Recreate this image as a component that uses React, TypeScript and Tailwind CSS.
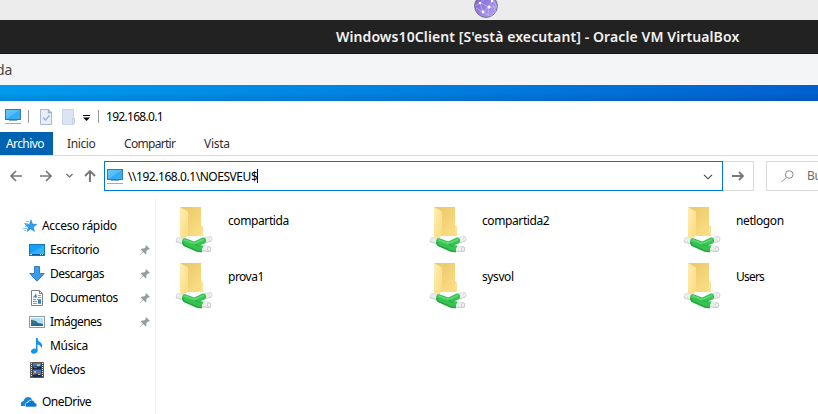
import React from "react";

const ui = "font-['Noto_Sans','Open_Sans',sans-serif] text-[12px] leading-[16px] whitespace-nowrap";

function Monitor({ className }: { className: string }) {
  return (
    <svg width="16" height="16" viewBox="0 0 16 16" className={`block shrink-0 ${className}`}>
      <defs>
        <linearGradient id="screen" x1="0" y1="0" x2="1" y2="1">
          <stop offset="0" stopColor="#6bcbfa" />
          <stop offset=".5" stopColor="#4fbbf8" />
          <stop offset=".52" stopColor="#34aaf5" />
          <stop offset="1" stopColor="#38b2fa" />
        </linearGradient>
      </defs>
      <rect x=".5" y=".5" width="15" height="10" fill="url(#screen)" stroke="#3978a0" />
      <path d="M4 11h8v1H4z" fill="#81aac5" />
      <path d="M0 14.5h16" stroke="#93b0c0" />
    </svg>
  );
}

function Globe() {
  return (
    <svg width="24" height="18" viewBox="0 0 24 18" className="block">
      <defs>
        <linearGradient id="globe" x1="0" y1="0" x2="1" y2="1">
          <stop offset=".2" stopColor="#8469d5" />
          <stop offset="1" stopColor="#b8a8f5" />
        </linearGradient>
      </defs>
      <circle cx="12" cy="6" r="11.4" fill="url(#globe)" stroke="#74708d" />
      <path d="M1 6 6 3l9 4-6 5-3-9 5-4m4 8 4-7 4 7-8 0-1 9m-5-4-7-4m7 4 7 4 6-4-3-7" fill="none" stroke="#c9bdf3" strokeWidth=".6" />
      <circle cx="6" cy="3" r="1.3" fill="#fff" />
      <circle cx="15" cy="7" r="1.5" fill="#fff" />
      <circle cx="9" cy="12" r="1.4" fill="#fff" />
      <circle cx="18" cy="1" r="1.2" fill="#fff" />
    </svg>
  );
}

function Folder() {
  return (
    <svg width="40" height="50" viewBox="0 0 40 50" className="block shrink-0">
      <defs>
        <linearGradient id="folderBack" x1="0" y1="0" x2="1" y2="1">
          <stop stopColor="#e8c667" />
          <stop offset="1" stopColor="#ffe087" />
        </linearGradient>
        <linearGradient id="folderFront" x1="0" y1="0" x2="1" y2="1">
          <stop stopColor="#ffeeb3" />
          <stop offset="1" stopColor="#fada80" />
        </linearGradient>
      </defs>
      <path d="M5 3h21v18l2 2v9H12z" fill="url(#folderBack)" />
      <path d="M5 3l8 4.5V30l-3 5-5-2z" fill="url(#folderFront)" />
      <path d="M26 21l2 2v9h-2z" fill="#fce394" />
      <g strokeLinecap="round" strokeLinejoin="round" fill="none">
        <path d="M3.8 36.2l6 1.7M28 37.2l6.3-2M27 44.3l6.3 1" stroke="#cdd1d2" strokeWidth="6" />
        <path d="M3.8 35.8l6 1.7M28 36.8l6.3-2M27 43.9l6.3 1" stroke="#eceeef" strokeWidth="4.4" />
      </g>
      <path
        d="M7.3 36Q8 33.8 10.4 34.3L19.3 37.4 27.6 33.6Q30 33 31 35.5 31.8 38 29.8 39.2L25.4 41.2 28.4 41.8Q26.6 44.5 27 47.9 25 48.6 21.5 47.8L9.2 42.2Q6.4 40.6 7.3 36z"
        fill="#37c252"
      />
      <path d="M8 38Q8 41 10 41.6L22 46.9l5 .8" stroke="#25a33f" strokeWidth="1.3" fill="none" />
      <path d="M9.2 35.9 19.3 39.6 29 35.3" stroke="#56d96e" strokeWidth="2" fill="none" strokeLinejoin="round" />
      <path d="M19.5 40.4l4.6 1.6" stroke="#2cb048" strokeWidth="1.2" />
      <ellipse cx="34" cy="45" rx="1.5" ry="2.2" fill="#f8f8f8" stroke="#c3c6c7" strokeWidth=".8" />
      <ellipse cx="3" cy="36" rx="1.2" ry="2" fill="#fafafa" stroke="#d6d8d9" strokeWidth=".7" />
      <ellipse cx="35.3" cy="34.9" rx="1.2" ry="2" fill="#fafafa" stroke="#d6d8d9" strokeWidth=".7" />
    </svg>
  );
}

function Pin() {
  return (
    <svg width="12" height="12" viewBox="0 0 12 12" className="block">
      <path d="M7 1l4 4-1.2.6-.8-.2-1.7 1.8.2 2.2-1.1.8-2.1-2.1L1 11.3l-.4-.4L3.7 7.4 1.8 5.5l1-1 2.2.1 1.8-1.7-.3-.9z" fill="#929da6" />
    </svg>
  );
}

type Kind = "star" | "desktop" | "download" | "document" | "picture" | "music" | "video" | "cloud";

function SideIcon({ kind }: { kind: Kind }) {
  return (
    <svg width="16" height="16" viewBox="0 0 16 16" className="block shrink-0">
      {kind === "star" && (
        <>
          <path d="M9 2l1.5 4.1 4.5.2-3.6 2.7 1.1 4.5L8.8 11 5 13.5l1.2-4.3L3 6.5h4.3z" fill="#2e9de7" stroke="#1684ce" strokeWidth=".5" />
          <path d="M4 3.5h3M2 5.5h4M3 8.5h3M1 10.5h4M2 12.5h2" stroke="#67b6e7" strokeWidth=".8" />
        </>
      )}
      {kind === "desktop" && (
        <>
          <rect x=".5" y="2.5" width="15" height="11" fill="#16a0f8" stroke="#1579b9" />
          <path d="M1 12L15 3v9z" fill="#34b0fc" />
          <path d="M1 12.5h14" stroke="#075b99" />
          <path d="M1 12.5h2m8 0h1m1 0h1" stroke="#b8e9ff" />
        </>
      )}
      {kind === "download" && <path d="M5.5.5h5v7h4.7L8 15.2.8 7.5h4.7z" fill="#3c9cea" stroke="#2c7fc8" />}
      {kind === "document" && (
        <>
          <path d="M2.5.5h8l3 3v12h-11z" fill="#fff" stroke="#7d8286" />
          <path d="M10.5.5v3h3" fill="none" stroke="#7d8286" />
          <path d="M9 5.5h3M9 7.5h3M4 9.5h3m1 0h4M4 11.5h4M4 13.5h4m1 0h3" stroke="#6f9fbe" />
          <path d="M4 7.5h4l-1-4zM9 10h3v3H9z" fill="#3583ba" />
        </>
      )}
      {kind === "picture" && (
        <>
          <rect x=".5" y="2.5" width="15" height="11" fill="#fff" stroke="#8f999f" />
          <path d="M2 4h12v8H2z" fill="#b4def5" />
          <path d="M2 6q5 0 7 3l5 1v2H2z" fill="#397478" />
          <path d="M2 10.5q6-1.5 12-.5v2H2z" fill="#2368a0" />
        </>
      )}
      {kind === "music" && (
        <>
          <path d="M7 0h1.5q.3 3 3 4.5 3 2.2.8 6-.2-3.2-3.8-4v6.7L7 14z" fill="#1393ed" />
          <ellipse cx="5.2" cy="13.1" rx="3.3" ry="2.5" fill="#1094f0" transform="rotate(-15 5.2 13.1)" />
        </>
      )}
      {kind === "video" && (
        <>
          <path d="M1.5.5h13v15h-13z" fill="#414346" stroke="#5c5d60" />
          <path d="M4 1h8v6H4zM4 8h8v7H4z" fill="#4078c4" />
          <path d="M4 5l3-1 2 1 3-1v3H4zM4 13l4-1 4 1v2H4z" fill="#182d4d" />
          <path d="M8 2h3v2H8zm-3 7h2v2H5zm4 3h2v1H9z" fill="#e0b449" />
          <path d="M5 5h3v1H5zm3 5h2v1H8z" fill="#b34e52" />
          <path d="M2.5 1v14M13.5 1v14" stroke="#eee" strokeDasharray="1 1" />
        </>
      )}
      {kind === "cloud" && (
        <>
          <path d="M0 12V9q.5-2 2.6-2Q3.8 3 7.2 3q3 0 4.2 2.5L7 7 4 12z" fill="#1684d4" />
          <path d="M5 13q-2-2 0-4 .8-.8 2-.6Q8 6 10.5 6q2.7 0 3.3 2.8 2.2.3 2.2 2.4 0 1.8-2 1.8z" fill="#0878d4" stroke="#fff" strokeWidth=".6" />
        </>
      )}
    </svg>
  );
}

const places: { name: string; kind: Kind; pin?: boolean; track: string }[] = [
  { name: "Escritorio", kind: "desktop", pin: true, track: "tracking-[-0.4px]" },
  { name: "Descargas", kind: "download", pin: true, track: "tracking-[-0.5px]" },
  { name: "Documentos", kind: "document", pin: true, track: "tracking-[-0.4px]" },
  { name: "Imágenes", kind: "picture", pin: true, track: "tracking-[-0.6px]" },
  { name: "Música", kind: "music", track: "tracking-[-0.3px]" },
  { name: "Vídeos", kind: "video", track: "tracking-[-0.4px]" },
];

const shares = [
  { name: "compartida", track: "tracking-[-0.4px]" },
  { name: "compartida2", track: "tracking-[-0.4px]" },
  { name: "netlogon", track: "tracking-[-0.4px]" },
  { name: "prova1", track: "tracking-[-0.5px]" },
  { name: "sysvol", track: "tracking-[-0.4px]" },
  { name: "Users", track: "tracking-[-0.8px]" },
];

export default function App() {
  return (
    <div className={`flex h-[414px] w-[818px] flex-col overflow-hidden bg-white text-black ${ui}`}>
      <header className="h-5 shrink-0 bg-[#ececec] pl-[474px]"><Globe /></header>
      <div className="h-[34px] shrink-0 border-b border-[#161616] bg-[#222222] pl-[336px] pt-[7px] font-['Noto_Sans',sans-serif] text-[14px] font-semibold leading-5 text-[#f2f2f2]">
        <span className="tracking-[0.1px]">Windows10Client [S'està executant] - Oracle VM VirtualBox</span>
      </div>
      <div className="h-[31px] shrink-0 bg-[#f4f5f7] pt-[6px] text-[14px] leading-5 text-[#464646]">
        <span className="-ml-1">da</span>
      </div>
      <div className="h-4 shrink-0 bg-linear-to-r from-[#009bee] via-[#0080e0] to-[#005fce]">
        <div className="h-full bg-linear-to-b from-transparent via-transparent to-[#00387533]" />
      </div>

      <div className="flex h-[31px] shrink-0 items-center pl-[5px]">
        <Monitor className="mt-px" />
        <span className="ml-[7px] h-[13px] w-px bg-[#989898]" />
        <svg width="12" height="16" viewBox="0 0 12 16" className="ml-[11px] mt-px">
          <path d="M.5.5h8l3 3v12H.5z" fill="#e8eef7" stroke="#a8b8d0" />
          <path d="M8.5.5v3h3M3 8.5l2.5 2.5 4-4.5" fill="none" stroke="#9bafc9" strokeWidth="1.3" />
        </svg>
        <svg width="13" height="16" viewBox="0 0 13 16" className="ml-[10px] mt-px">
          <path d="M.5.5h11v15H.5z" fill="#dbe4f3" stroke="#c9d6e8" />
          <path d="M10.5 9.5h2v5h-2z" fill="#e2e9f4" stroke="#bdcde1" />
        </svg>
        <svg width="7" height="6" viewBox="0 0 7 6" className="ml-2 mt-[3px]">
          <path d="M0 .5h7" stroke="#000" />
          <path d="M0 2.5h7L3.5 6z" fill="#000" />
        </svg>
        <span className="ml-2 h-[13px] w-px bg-[#989898]" />
        <span className="ml-[7px] tracking-[-0.7px]">192.168.0.1</span>
      </div>

      <nav className="flex h-6 shrink-0 border-b border-[#dadbdc] leading-[24px] text-[#303030]">
        <span className="h-[23px] w-[53px] bg-[#0063b1] pl-[6px] tracking-[-0.6px] text-white">Archivo</span>
        <span className="w-[57px] pl-[14px] tracking-[-0.4px]">Inicio</span>
        <span className="w-[80px] pl-[14px] tracking-[-0.7px]">Compartir</span>
        <span className="pl-[14px] tracking-[-0.3px]">Vista</span>
      </nav>

      <div className="flex h-[42px] shrink-0 pt-[5px]">
        <div className="w-[104px] shrink-0">
          <svg width="104" height="30" viewBox="0 0 104 30" fill="none" stroke="#777">
            <path d="M22 15H11m5-5-5 5 5 5M40 15h11m-5-5 5 5-5 5" strokeWidth="1.7" />
            <path d="M66.5 13l3 3 3-3" strokeWidth="1.5" />
            <path d="M90 21V10m-5 5 5-5 5 5" strokeWidth="1.9" />
          </svg>
        </div>
        <div className="flex h-[30px] w-[619px] shrink-0 items-center border border-[#0078d7] pl-[2px]">
          <Monitor className="mt-[2px]" />
          <span className="ml-[5px] mt-px tracking-[-0.45px]">\\192.168.0.1\NOESVEU$</span>
          <span className="h-[14px] w-px bg-black" />
          <svg width="10" height="6" viewBox="0 0 10 6" className="ml-auto mr-[9px] mt-[2px]">
            <path d="M1 .8l4 4 4-4" fill="none" stroke="#444" strokeWidth="1.1" />
          </svg>
        </div>
        <div className="flex h-[30px] w-[31px] shrink-0 items-center justify-center border border-l-0 border-[#d9d9d9]">
          <svg width="12" height="10" viewBox="0 0 12 10" fill="none" stroke="#777" strokeWidth="1.8">
            <path d="M0 5h11M7 1l4 4-4 4" />
          </svg>
        </div>
        <div className="ml-3 flex h-[30px] w-[90px] shrink-0 items-center border border-[#d9d9d9] pl-[14px] text-[#6d6d6d]">
          <svg width="13" height="13" viewBox="0 0 13 13" fill="none" stroke="#858b92" className="shrink-0">
            <circle cx="8.2" cy="4.5" r="3.8" /><path d="M5.5 7.2.5 12.2" />
          </svg>
          <span className="ml-[13px] tracking-[-0.4px]">Buscar</span>
        </div>
      </div>

      <main className="flex min-h-0 flex-1">
        <aside className="w-[156px] shrink-0 border-r border-[#f1f1f1] pt-4">
          <div className="flex h-6 items-center pl-[22px]">
            <SideIcon kind="star" /><span className="ml-1 tracking-[-0.3px]">Acceso rápido</span>
          </div>
          {places.map((p) => (
            <div key={p.name} className="flex h-6 items-center pl-[29px] pr-1">
              <SideIcon kind={p.kind} />
              <span className={`ml-[5px] mr-auto ${p.track}`}>{p.name}</span>
              {p.pin && <Pin />}
            </div>
          ))}
          <div className="mt-2 flex h-6 items-center pl-[21px]">
            <SideIcon kind="cloud" /><span className="ml-[5px] tracking-[-0.52px]">OneDrive</span>
          </div>
        </aside>
        <section className="grid h-max w-[781px] shrink-0 auto-rows-[56px] grid-cols-[254px_254px_254px] pl-[19px] pt-[6px]">
          {shares.map((s) => (
            <div key={s.name} className="flex">
              <Folder />
              <span className={`ml-[13px] mt-[9px] ${s.track}`}>{s.name}</span>
            </div>
          ))}
        </section>
      </main>
    </div>
  );
}
